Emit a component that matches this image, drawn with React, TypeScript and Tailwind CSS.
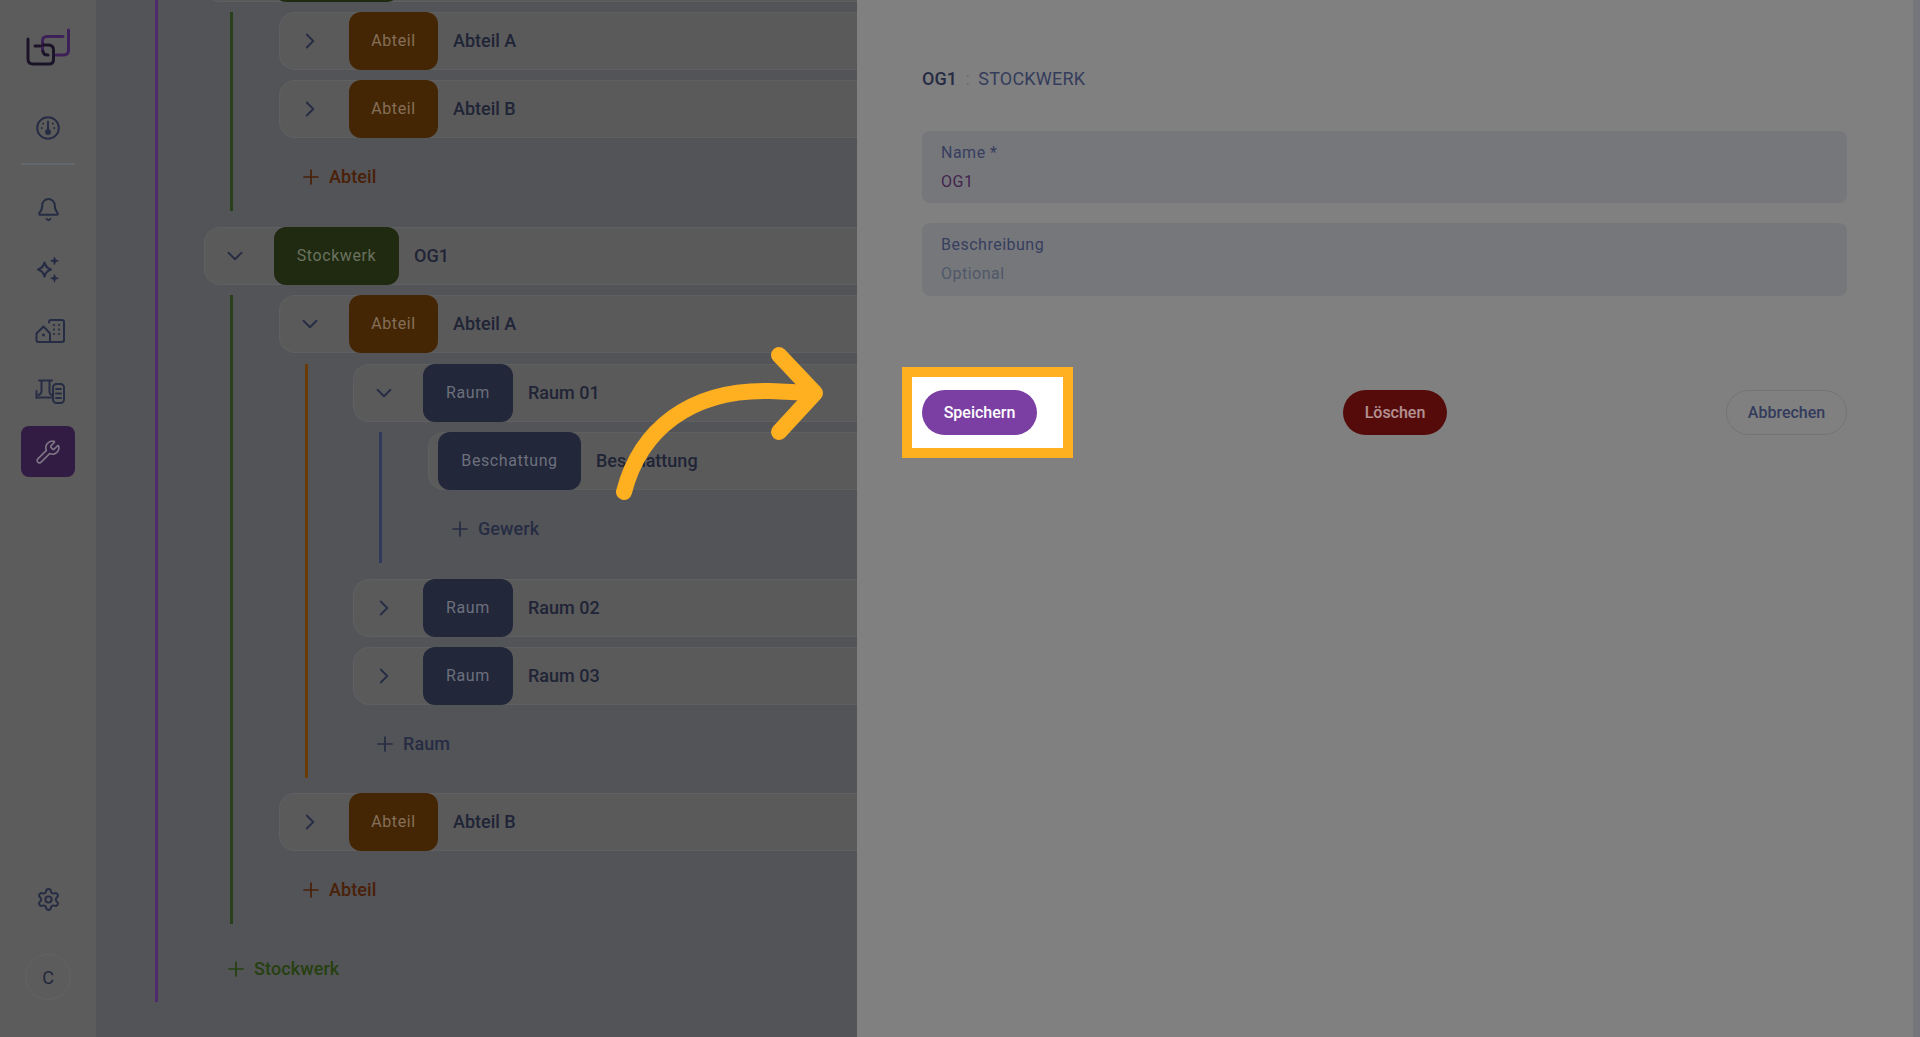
import { Bell, ChevronDown, ChevronRight, Plus, Settings, Wrench } from 'lucide-react'
import type { ReactNode } from 'react'

const iconColor = '#262c44'

function Logo() {
  return (
    <svg width="46" height="40" viewBox="25 27 46 40" fill="none" strokeWidth="3" strokeLinecap="round">
      <path d="M42.5 50V40q0-4.5 4.5-4.5h16" stroke="#3e2058" />
      <path d="M68.5 29v20q0 5-5 5H56" stroke="#3e2058" />
      <path d="M28 38v20q0 5 5 5h16q4.500 0 4.500-4.500V49q0-5-5-5H43" stroke="#1b1429" />
      <path d="M35 45h5M43 50q0 4 5 4" stroke="#1b1429" />
    </svg>
  )
}

function Gauge() {
  return (
    <svg width="26" height="26" viewBox="0 0 26 26" fill="none" stroke={iconColor} strokeWidth="2" strokeLinecap="round">
      <circle cx="13" cy="13" r="10.800" />
      <path d="M13 6.500v9" />
      <circle cx="13" cy="17" r="1.900" fill={iconColor} />
      <path d="M8.200 8.500h.01M17.800 8.500h.01M6.800 13h.01M19.200 13h.01" />
    </svg>
  )
}

function Sparkle() {
  return (
    <svg width="26" height="26" viewBox="0 0 26 26" fill="none" stroke={iconColor} strokeLinejoin="round">
      <path d="M9.500 5.500c.8 3.800 2.500 5.700 6.500 7-4 1.300-5.700 3.200-6.500 7-.8-3.800-2.500-5.700-6.500-7 4-1.300 5.700-3.200 6.500-7z" strokeWidth="2.200" />
      <path d="M19.500 0c.4 2.500 1.300 3.400 3.800 3.800-2.500.4-3.400 1.300-3.800 3.800-.4-2.500-1.300-3.400-3.800-3.800C18.200 3.400 19.100 2.500 19.500 0zM19.500 17.500c.4 2.500 1.300 3.400 3.800 3.800-2.500.4-3.400 1.300-3.800 3.800-.4-2.500-1.300-3.400-3.800-3.800 2.500-.4 3.400-1.300 3.800-3.800z" fill={iconColor} strokeWidth="1" />
    </svg>
  )
}

function Buildings() {
  return (
    <svg className="ml-[4px]" width="30" height="24" viewBox="0 0 30 24" fill="none" stroke={iconColor} strokeWidth="2" strokeLinejoin="round" strokeLinecap="round">
      <path d="M1.500 14.500 8.500 7.500l6.500 7V23H3.500q-2 0-2-2z" />
      <path d="M14 3.500V3q0-2 2-2h11q2 0 2 2v18q0 2-2 2H15" />
      <circle cx="8.500" cy="16" r="1.500" fill={iconColor} stroke="none" />
      <path d="M19 6h.01M24 6h.01M19 10.500h.01M24 10.500h.01M19 15h.01M24 15h.01" strokeWidth="2.200" />
    </svg>
  )
}

function Plant() {
  return (
    <svg className="ml-[4px]" width="30" height="25" viewBox="0 0 30 25" fill="none" stroke={iconColor} strokeWidth="2" strokeLinejoin="round" strokeLinecap="round">
      <path d="M4 1.500h13M6.500 1.500V12q0 3-3 4M14.500 1.500V13q0 2 2 3" />
      <path d="M1.500 12v7M1.500 18.500H16" />
      <rect x="18" y="5" width="11" height="19" rx="3.500" />
      <path d="M21 10h5M21 14.500h5M21 19h5" />
    </svg>
  )
}

function Slot({ active, children }: { active?: boolean; children: ReactNode }) {
  return (
    <div className={active ? 'flex h-[51px] w-[54px] items-center justify-center rounded-lg bg-[#321c44]' : 'flex h-[51px] w-[54px] items-center justify-center'}>
      {children}
    </div>
  )
}

function Sidebar() {
  return (
    <aside className="flex h-full w-[96px] shrink-0 flex-col items-center bg-[#5c5c5c]">
      <div className="mt-[28px]">
        <Logo />
      </div>
      <div className="mt-[34px]">
        <Slot>
          <Gauge />
        </Slot>
      </div>
      <div className="mt-[10px] h-[2px] w-[54px] bg-[#62676c]" />
      <div className="mt-[19px] flex flex-col gap-[9.500px]">
        <Slot>
          <Bell size={25} strokeWidth={1.900} color={iconColor} />
        </Slot>
        <Slot>
          <Sparkle />
        </Slot>
        <Slot>
          <Buildings />
        </Slot>
        <Slot>
          <Plant />
        </Slot>
        <Slot active>
          <Wrench size={26} strokeWidth={1.500} color="#7f7685" />
        </Slot>
      </div>
      <div className="mt-auto">
        <Settings size={25} strokeWidth={1.900} color={iconColor} />
      </div>
      <div className="mb-[37px] mt-[42px] flex h-[46px] w-[46px] items-center justify-center rounded-full border border-[#636363] text-[18px] text-[#22273a]">
        C
      </div>
    </aside>
  )
}

function Row({ open, chip, chipClass, title, bare }: { open?: boolean; chip?: string; chipClass: string; title?: string; bare?: boolean }) {
  return (
    <div className="mb-[10.500px] flex h-[57.500px] items-center rounded-l-[16px] border border-r-0 border-[#5f6061] bg-[#5a5a5b]">
      <div className={bare ? 'w-[9px] shrink-0' : open ? 'flex w-[69px] shrink-0 items-center justify-center pr-[10px]' : 'flex w-[69px] shrink-0 items-center justify-center pr-[9px]'}>
        {bare ? null : open ? (
          <ChevronDown size={26} strokeWidth={1.700} color={iconColor} />
        ) : (
          <ChevronRight size={26} strokeWidth={1.700} color={iconColor} />
        )}
      </div>
      <div className={`flex h-[57.500px] items-center justify-center rounded-[12px] px-[20px] text-[16px] tracking-[0.6px] text-white/35 ${chipClass}`}>
        {chip}
      </div>
      <span className="ml-[15px] text-[18px] font-medium text-[#1f2436]">{title}</span>
    </div>
  )
}

function AddLine({ label, color }: { label: string; color: string }) {
  return (
    <div className="flex h-[57.500px] items-center pl-[20px]">
      <Plus size={24} strokeWidth={1.700} color={color} />
      <span className="ml-[6px] text-[18px] font-medium tracking-[0.1px]" style={{ color }}>
        {label}
      </span>
    </div>
  )
}

function Branch({ line, children }: { line: string; children: ReactNode }) {
  return <div className={`ml-[26px] border-l-[3px] ${line}`}>{children}</div>
}

const abteil = 'w-[89px] bg-[#452604]'
const stock = 'w-[125px] bg-[#1f2a10]'
const raum = 'w-[90px] bg-[#22273a]'
const gewerk = 'w-[143px] bg-[#22273a]'

function Tree() {
  return (
    <main className="h-full w-[761px] shrink-0 overflow-hidden bg-[#535457] pl-[59px]">
      <div className="-mt-[56px] border-l-[3px] border-[#4f2a6c] pb-[4px] pl-[46px]">
        <Row chipClass={stock} open />
        <Branch line="mb-[16.500px] border-[#27401a] pb-[5px] pl-[46px]">
          <Row chip="Abteil" chipClass={abteil} title="Abteil A" />
          <Row chip="Abteil" chipClass={abteil} title="Abteil B" />
          <AddLine label="Abteil" color="#4a2008" />
        </Branch>
        <Row chip="Stockwerk" chipClass={stock} title="OG1" open />
        <Branch line="mb-[16.500px] border-[#27401a] pb-[5px] pl-[46px]">
          <Row chip="Abteil" chipClass={abteil} title="Abteil A" open />
          <Branch line="mb-[15.500px] mt-[11.500px] border-[#6a3b05] pb-[5px] pl-[45px]">
            <Row chip="Raum" chipClass={raum} title="Raum 01" open />
            <Branch line="mb-[16.500px] border-[#303a5a] pb-[5px] pl-[46px]">
              <Row chip="Beschattung" chipClass={gewerk} title="Beschattung" bare />
              <AddLine label="Gewerk" color="#262c44" />
            </Branch>
            <Row chip="Raum" chipClass={raum} title="Raum 02" />
            <Row chip="Raum" chipClass={raum} title="Raum 03" />
            <AddLine label="Raum" color="#262c44" />
          </Branch>
          <Row chip="Abteil" chipClass={abteil} title="Abteil B" />
          <AddLine label="Abteil" color="#4a2008" />
        </Branch>
        <AddLine label="Stockwerk" color="#26400f" />
      </div>
    </main>
  )
}

function Field({ label, value, valueClass, height }: { label: string; value: string; valueClass: string; height: string }) {
  return (
    <div className={`rounded-lg bg-[#76777b] px-[19px] pt-[12px] tracking-[0.5px] ${height}`}>
      <div className="text-[16px] leading-[20px] text-[#363e5e]">{label}</div>
      <div className={`mt-[9px] text-[16px] leading-[20px] ${valueClass}`}>{value}</div>
    </div>
  )
}

function Panel() {
  return (
    <section className="h-full flex-1 bg-[#808080] pl-[65px] pr-[66px] pt-[64px]">
      <div className="flex h-[28px] items-center text-[18px]">
        <span className="font-medium text-[#262b44]">OG1</span>
        <span className="mx-[8.500px] text-[#6e6e6e]">:</span>
        <span className="tracking-[0.2px] text-[#343c5c]">STOCKWERK</span>
      </div>
      <div className="mt-[39px]">
        <Field label="Name *" value="OG1" valueClass="text-[#42244f]" height="h-[72px]" />
      </div>
      <div className="mt-[20px]">
        <Field label="Beschreibung" value="Optional" valueClass="text-[#4f5868]" height="h-[73px]" />
      </div>
      <div className="mt-[94px] flex items-center text-[16px] font-medium">
        <div className="relative w-[115px]">
          {/* highlight of the tutorial step */}
          <div className="absolute -bottom-[23px] -left-[20px] -right-[36px] -top-[23px] border-[10px] border-[#ffb020] bg-white" />
          <button className="relative h-[45px] w-[115px] rounded-full bg-[#7b3fa3] text-white">Speichern</button>
        </div>
        <button className="ml-[306px] h-[45px] w-[104px] rounded-full bg-[#560b0b] text-white/55">Löschen</button>
        <button className="ml-auto h-[45px] w-[121px] rounded-full border border-[#737478] text-[#333b5c]">Abbrechen</button>
      </div>
    </section>
  )
}

function Arrow() {
  return (
    <svg className="absolute left-[600px] top-[340px] z-10" width="240" height="170" viewBox="600 340 240 170" fill="none" stroke="#ffb020" strokeWidth="16" strokeLinecap="round" strokeLinejoin="round">
      <path d="M624 492C640 430 690 389 770 391L812 393" />
      <path d="M779 355L815 393L779 432" />
    </svg>
  )
}

export default function App() {
  return (
    <div className="relative flex h-[1037px] w-[1920px] overflow-hidden font-['Roboto',sans-serif]">
      <Sidebar />
      <Tree />
      <Panel />
      <div className="h-full w-[7px] shrink-0 bg-[#75767b]" />
      <Arrow />
    </div>
  )
}
